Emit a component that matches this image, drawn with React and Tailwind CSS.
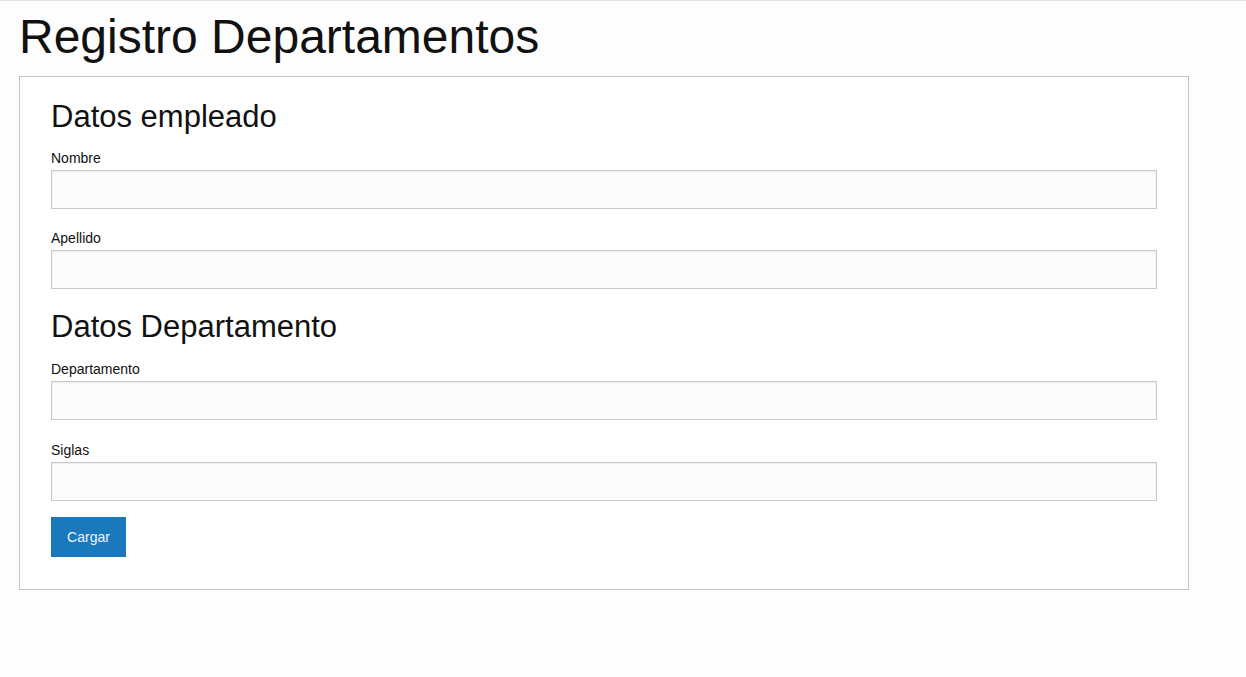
export default function App() {
  const fields1 = ["Nombre", "Apellido"];
  const fields2 = ["Departamento", "Siglas"];

  const Field = ({ label, gap }) => (
    <div className={gap}>
      <label className="mb-[2px] block text-[14px] leading-5 text-[#111]">{label}</label>
      <input
        type="text"
        className="block h-[39px] w-full border border-[#c9c9c9] bg-[#fcfcfc] px-2 shadow-[inset_0_1px_2px_rgba(0,0,0,0.07)] outline-none"
      />
    </div>
  );

  return (
    <div className="min-h-[677px] border-t border-[#e3e3e3] bg-[#fdfdfd] px-[19px] font-['Liberation_Sans',Arial,sans-serif] text-[#111]">
      <h1 className="mt-[8px] mb-[11px] text-[48px] leading-[56px] font-normal">Registro Departamentos</h1>

      <div className="w-[1170px] border border-[#c4c4c4] bg-white px-[31px] pt-5 pb-[32px]">
        <h2 className="mb-[11px] text-[31px] leading-10 font-normal">Datos empleado</h2>
        {fields1.map((f) => (
          <Field key={f} label={f} gap="mb-[19px]" />
        ))}

        <h2 className="-mt-[1px] mb-3 text-[31px] leading-10 font-normal">Datos Departamento</h2>
        {fields2.map((f) => (
          <Field key={f} label={f} gap="mb-5" />
        ))}

        <button className="-mt-1 block h-10 w-[75px] bg-[#1a78bd] text-[14px] text-[#eef4fa]">Cargar</button>
      </div>
    </div>
  );
}
